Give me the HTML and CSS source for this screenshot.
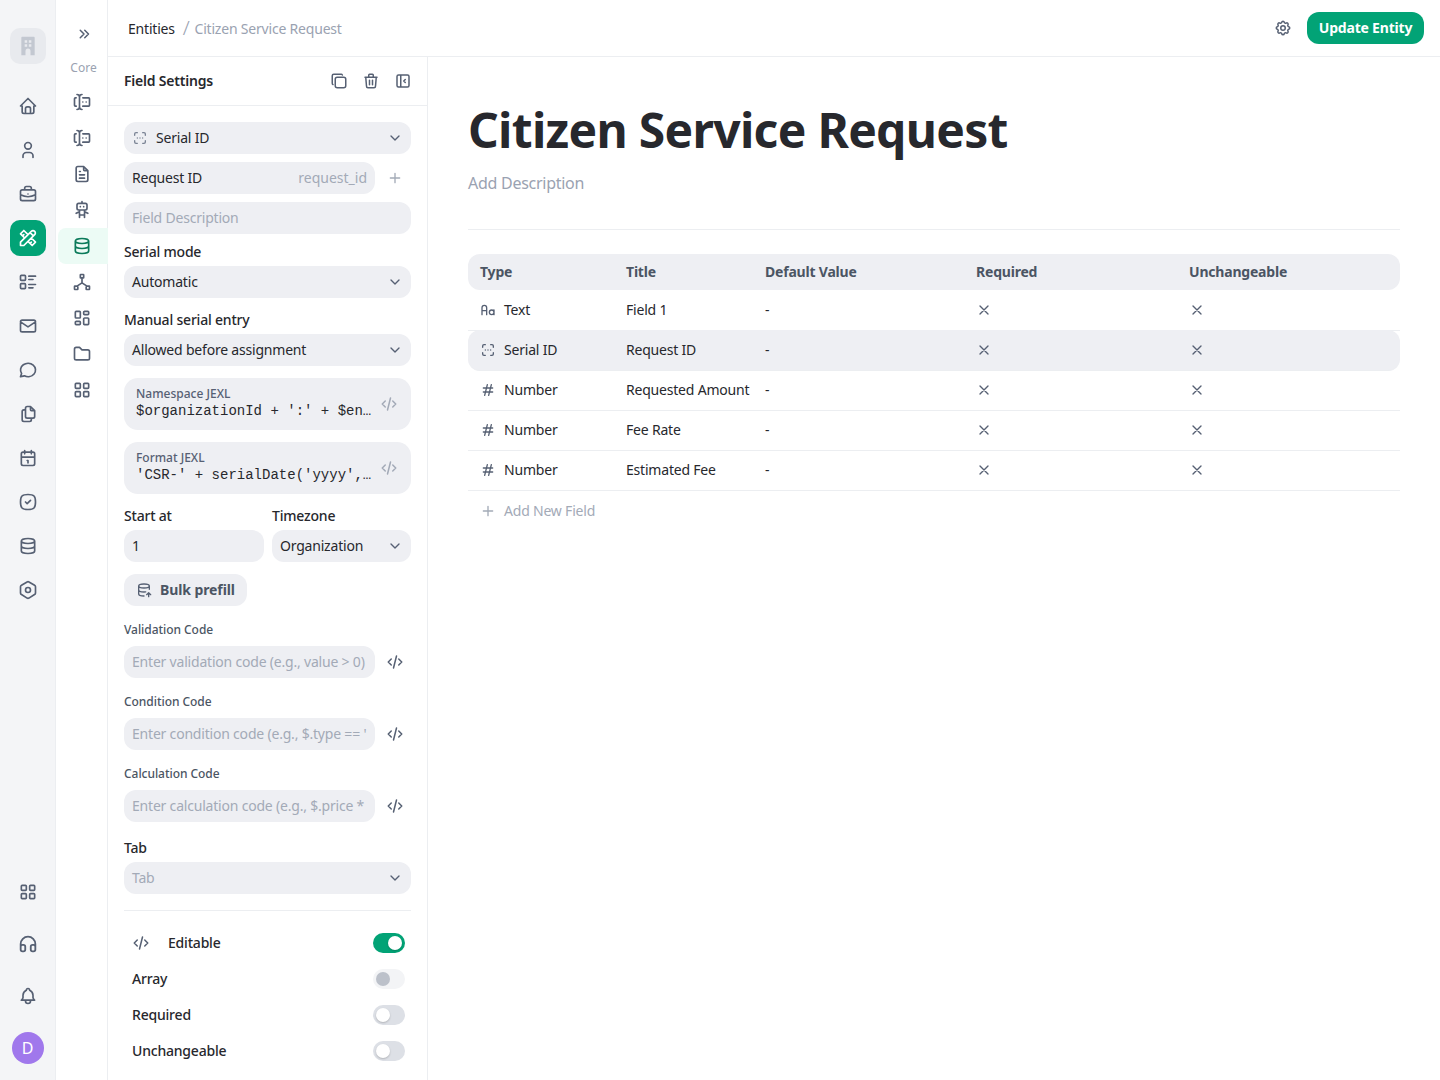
FILE: index.html
```html
<!DOCTYPE html>
<html lang="en">
<head>
<meta charset="UTF-8">
<meta name="viewport" content="width=device-width, initial-scale=1.0">
<title>Citizen Service Request</title>
<link rel="stylesheet" href="styles.css">
</head>
<body>
<svg class="sprite" xmlns="http://www.w3.org/2000/svg">
  <symbol id="i-home" viewBox="0 0 24 24"><path d="M5 12H3l9-9 9 9h-2M5 12v7a2 2 0 0 0 2 2h10a2 2 0 0 0 2-2v-7M9 21v-6a2 2 0 0 1 2-2h2a2 2 0 0 1 2 2v6"/></symbol>
  <symbol id="i-user" viewBox="0 0 24 24"><path d="M8 7a4 4 0 1 0 8 0a4 4 0 0 0-8 0M6 21v-2a4 4 0 0 1 4-4h4a4 4 0 0 1 4 4v2"/></symbol>
  <symbol id="i-briefcase" viewBox="0 0 24 24"><path d="M3 9a2 2 0 0 1 2-2h14a2 2 0 0 1 2 2v9a2 2 0 0 1-2 2H5a2 2 0 0 1-2-2zM8 7V5a2 2 0 0 1 2-2h4a2 2 0 0 1 2 2v2M12 12v.01M3 13a20 20 0 0 0 18 0"/></symbol>
  <symbol id="i-tools" viewBox="0 0 24 24"><path d="M3 21h4L20 8a1.5 1.5 0 0 0-4-4L3 17v4M14.5 5.5l4 4M12 8L7 3 3 7l5 5M7 8L5.5 9.5M16 12l5 5-4 4-5-5M16 17l-1.5 1.5"/></symbol>
  <symbol id="i-list" viewBox="0 0 24 24"><path d="M13 5h8M13 9h5M13 15h8M13 19h5M4 4h4a1 1 0 0 1 1 1v4a1 1 0 0 1-1 1H4a1 1 0 0 1-1-1V5a1 1 0 0 1 1-1zM4 14h4a1 1 0 0 1 1 1v4a1 1 0 0 1-1 1H4a1 1 0 0 1-1-1v-4a1 1 0 0 1 1-1z"/></symbol>
  <symbol id="i-mail" viewBox="0 0 24 24"><path d="M3 7a2 2 0 0 1 2-2h14a2 2 0 0 1 2 2v10a2 2 0 0 1-2 2H5a2 2 0 0 1-2-2zM3 7l9 6 9-6"/></symbol>
  <symbol id="i-message" viewBox="0 0 24 24"><path d="M3 20l1.3-3.9C1.976 12.663 2.874 8.228 6.4 5.726c3.526-2.501 8.59-2.296 11.845.48 3.255 2.777 3.695 7.266 1.029 10.501C16.608 19.942 11.659 20.922 7.7 19L3 20"/></symbol>
  <symbol id="i-files" viewBox="0 0 24 24"><path d="M15 3v4a1 1 0 0 0 1 1h4M18 17h-7a2 2 0 0 1-2-2V5a2 2 0 0 1 2-2h4l5 5v7a2 2 0 0 1-2 2zM16 17v2a2 2 0 0 1-2 2H7a2 2 0 0 1-2-2V9a2 2 0 0 1 2-2h2"/></symbol>
  <symbol id="i-calendar" viewBox="0 0 24 24"><path d="M4 7a2 2 0 0 1 2-2h12a2 2 0 0 1 2 2v12a2 2 0 0 1-2 2H6a2 2 0 0 1-2-2zM16 3v4M8 3v4M4 11h16M11 15h1M12 15v3"/></symbol>
  <symbol id="i-check" viewBox="0 0 24 24"><path d="M9 12l2 2 4-4M12 3c7.2 0 9 1.8 9 9s-1.8 9-9 9-9-1.8-9-9 1.8-9 9-9z"/></symbol>
  <symbol id="i-database" viewBox="0 0 24 24"><path d="M4 6a8 3 0 1 0 16 0a8 3 0 1 0-16 0M4 6v6a8 3 0 0 0 16 0V6M4 12v6a8 3 0 0 0 16 0v-6"/></symbol>
  <symbol id="i-hexagon" viewBox="0 0 24 24"><path d="M19.875 6.27A2.225 2.225 0 0 1 21 8.218v7.284c0 .809-.443 1.555-1.158 1.948l-6.75 4.27a2.269 2.269 0 0 1-2.184 0l-6.75-4.27A2.225 2.225 0 0 1 3 15.502V8.217c0-.809.443-1.554 1.158-1.947l6.75-3.98a2.33 2.33 0 0 1 2.25 0l6.75 3.98zM9 12a3 3 0 1 0 6 0 3 3 0 1 0-6 0"/></symbol>
  <symbol id="i-grid" viewBox="0 0 24 24"><path d="M5 4h4a1 1 0 0 1 1 1v4a1 1 0 0 1-1 1H5a1 1 0 0 1-1-1V5a1 1 0 0 1 1-1zM15 4h4a1 1 0 0 1 1 1v4a1 1 0 0 1-1 1h-4a1 1 0 0 1-1-1V5a1 1 0 0 1 1-1zM5 14h4a1 1 0 0 1 1 1v4a1 1 0 0 1-1 1H5a1 1 0 0 1-1-1v-4a1 1 0 0 1 1-1zM15 14h4a1 1 0 0 1 1 1v4a1 1 0 0 1-1 1h-4a1 1 0 0 1-1-1v-4a1 1 0 0 1 1-1z"/></symbol>
  <symbol id="i-headphones" viewBox="0 0 24 24"><path d="M4 15a2 2 0 0 1 2-2h1a2 2 0 0 1 2 2v3a2 2 0 0 1-2 2H6a2 2 0 0 1-2-2zM15 15a2 2 0 0 1 2-2h1a2 2 0 0 1 2 2v3a2 2 0 0 1-2 2h-1a2 2 0 0 1-2-2zM4 15v-3a8 8 0 0 1 16 0v3"/></symbol>
  <symbol id="i-bell" viewBox="0 0 24 24"><path d="M10 5a2 2 0 1 1 4 0 7 7 0 0 1 4 6v3a4 4 0 0 0 2 3H4a4 4 0 0 0 2-3v-3a7 7 0 0 1 4-6M9 17v1a3 3 0 0 0 6 0v-1"/></symbol>
  <symbol id="i-chevrons" viewBox="0 0 24 24"><path d="M7 7l5 5-5 5M13 7l5 5-5 5"/></symbol>
  <symbol id="i-forms" viewBox="0 0 24 24"><path d="M12 3a3 3 0 0 0-3 3v12a3 3 0 0 0 3 3M6 3a3 3 0 0 1 3 3v12a3 3 0 0 1-3 3M13 7h7a1 1 0 0 1 1 1v8a1 1 0 0 1-1 1h-7M5 7H4a1 1 0 0 0-1 1v8a1 1 0 0 0 1 1h1M17 12h.01M13 12h.01"/></symbol>
  <symbol id="i-file" viewBox="0 0 24 24"><path d="M14 3v4a1 1 0 0 0 1 1h4M17 21H7a2 2 0 0 1-2-2V5a2 2 0 0 1 2-2h7l5 5v11a2 2 0 0 1-2 2zM9 9h1M9 13h6M9 17h6"/></symbol>
  <symbol id="i-robot" viewBox="0 0 24 24"><path d="M8 4h8a2 2 0 0 1 2 2v4a2 2 0 0 1-2 2H8a2 2 0 0 1-2-2V6a2 2 0 0 1 2-2zM12 2v2M9 12v9M15 12v9M5 16l4-2M15 14l4 2M9 18h6M10 8v.01M14 8v.01"/></symbol>
  <symbol id="i-tree" viewBox="0 0 24 24"><path d="M10.5 3h3a.5.5 0 0 1 .5.5v3a.5.5 0 0 1-.5.5h-3a.5.5 0 0 1-.5-.5v-3a.5.5 0 0 1 .5-.5zM3.5 17h3a.5.5 0 0 1 .5.5v3a.5.5 0 0 1-.5.5h-3a.5.5 0 0 1-.5-.5v-3a.5.5 0 0 1 .5-.5zM17.5 17h3a.5.5 0 0 1 .5.5v3a.5.5 0 0 1-.5.5h-3a.5.5 0 0 1-.5-.5v-3a.5.5 0 0 1 .5-.5zM12 7v6M12 13l-6 4M12 13l6 4"/></symbol>
  <symbol id="i-dashboard" viewBox="0 0 24 24"><path d="M5 4h4a1 1 0 0 1 1 1v6a1 1 0 0 1-1 1H5a1 1 0 0 1-1-1V5a1 1 0 0 1 1-1M5 16h4a1 1 0 0 1 1 1v2a1 1 0 0 1-1 1H5a1 1 0 0 1-1-1v-2a1 1 0 0 1 1-1M15 12h4a1 1 0 0 1 1 1v6a1 1 0 0 1-1 1h-4a1 1 0 0 1-1-1v-6a1 1 0 0 1 1-1M15 4h4a1 1 0 0 1 1 1v2a1 1 0 0 1-1 1h-4a1 1 0 0 1-1-1V5a1 1 0 0 1 1-1"/></symbol>
  <symbol id="i-folder" viewBox="0 0 24 24"><path d="M5 4h4l3 3h7a2 2 0 0 1 2 2v8a2 2 0 0 1-2 2H5a2 2 0 0 1-2-2V6a2 2 0 0 1 2-2"/></symbol>
  <symbol id="i-copy" viewBox="0 0 24 24"><path d="M7 9.667A2.667 2.667 0 0 1 9.667 7h8.666A2.667 2.667 0 0 1 21 9.667v8.666A2.667 2.667 0 0 1 18.333 21H9.667A2.667 2.667 0 0 1 7 18.333zM4.012 16.737A2.005 2.005 0 0 1 3 15V5c0-1.1.9-2 2-2h10c.75 0 1.158.385 1.5 1"/></symbol>
  <symbol id="i-trash" viewBox="0 0 24 24"><path d="M4 7h16M10 11v6M14 11v6M5 7l1 12a2 2 0 0 0 2 2h8a2 2 0 0 0 2-2l1-12M9 7V4a1 1 0 0 1 1-1h4a1 1 0 0 1 1 1v3"/></symbol>
  <symbol id="i-collapse" viewBox="0 0 24 24"><path d="M4 6a2 2 0 0 1 2-2h12a2 2 0 0 1 2 2v12a2 2 0 0 1-2 2H6a2 2 0 0 1-2-2zM9 4v16M15 10l-2 2 2 2"/></symbol>
  <symbol id="i-code" viewBox="0 0 24 24"><path d="M7 8l-4 4 4 4M17 8l4 4-4 4M14 4l-4 16"/></symbol>
  <symbol id="i-down" viewBox="0 0 24 24"><path d="M6 9l6 6 6-6"/></symbol>
  <symbol id="i-plus" viewBox="0 0 24 24"><path d="M12 5v14M5 12h14"/></symbol>
  <symbol id="i-x" viewBox="0 0 24 24"><path d="M18 6L6 18M6 6l12 12"/></symbol>
  <symbol id="i-hash" viewBox="0 0 24 24"><path d="M5 9h14M5 15h14M11 4L7 20M17 4l-4 16"/></symbol>
  <symbol id="i-gear" viewBox="0 0 24 24"><path d="M10.325 4.317c.426-1.756 2.924-1.756 3.35 0a1.724 1.724 0 0 0 2.573 1.066c1.543-.94 3.31.826 2.37 2.37a1.724 1.724 0 0 0 1.065 2.572c1.756.426 1.756 2.924 0 3.35a1.724 1.724 0 0 0-1.066 2.573c.94 1.543-.826 3.31-2.37 2.37a1.724 1.724 0 0 0-2.572 1.065c-.426 1.756-2.924 1.756-3.35 0a1.724 1.724 0 0 0-2.573-1.066c-1.543.94-3.31-.826-2.37-2.37a1.724 1.724 0 0 0-1.065-2.572c-1.756-.426-1.756-2.924 0-3.35a1.724 1.724 0 0 0 1.066-2.573c-.94-1.543.826-3.31 2.37-2.37 1 .608 2.296.07 2.572-1.065zM9 12a3 3 0 1 0 6 0 3 3 0 0 0-6 0"/></symbol>
  <symbol id="i-serial" viewBox="0 0 24 24"><path d="M4 8V6a2 2 0 0 1 2-2h2M4 16v2a2 2 0 0 0 2 2h2M16 4h2a2 2 0 0 1 2 2v2M16 20h2a2 2 0 0 0 2-2v-2M8 12h.01M12 12h.01M16 12h.01"/></symbol>
  <symbol id="i-case" viewBox="0 0 24 24"><path d="M14 15.5a3.5 3.5 0 1 0 7 0 3.5 3.5 0 1 0-7 0M3 19V8.5a3.5 3.5 0 0 1 7 0V19M3 13h7M21 12v7"/></symbol>
  <symbol id="i-prefill" viewBox="0 0 24 24"><path d="M4 6c0 1.657 3.582 3 8 3s8-1.343 8-3-3.582-3-8-3-8 1.343-8 3M4 6v6c0 1.657 3.582 3 8 3 .9 0 1.8-.06 2.6-.16M20 6v5M4 12v6c0 1.657 3.582 3 8 3M19 22v-6M22 19l-3-3-3 3"/></symbol>
</svg>

<div class="app">
  <nav class="rail">
    <div class="logo">
      <svg viewBox="0 0 24 24" width="20" height="24"><path class="logo-fill" fill-rule="evenodd" d="M5 1h14a1 1 0 0 1 1 1v21h-5v-5a3 3 0 0 0-6 0v5H4V2a1 1 0 0 1 1-1zM8 5v3h3V5zM13 5v3h3V5zM8 10v3h3v-3zM13 10v3h3v-3z"/></svg>
    </div>
    <div class="rail-list">
      <a class="rail-item"><svg class="icon"><use href="#i-home"/></svg></a>
      <a class="rail-item"><svg class="icon"><use href="#i-user"/></svg></a>
      <a class="rail-item"><svg class="icon"><use href="#i-briefcase"/></svg></a>
      <a class="rail-item active"><svg class="icon"><use href="#i-tools"/></svg></a>
      <a class="rail-item"><svg class="icon"><use href="#i-list"/></svg></a>
      <a class="rail-item"><svg class="icon"><use href="#i-mail"/></svg></a>
      <a class="rail-item"><svg class="icon"><use href="#i-message"/></svg></a>
      <a class="rail-item"><svg class="icon"><use href="#i-files"/></svg></a>
      <a class="rail-item"><svg class="icon"><use href="#i-calendar"/></svg></a>
      <a class="rail-item"><svg class="icon"><use href="#i-check"/></svg></a>
      <a class="rail-item"><svg class="icon"><use href="#i-database"/></svg></a>
      <a class="rail-item"><svg class="icon"><use href="#i-hexagon"/></svg></a>
    </div>
    <div class="rail-bottom">
      <a class="rail-item"><svg class="icon"><use href="#i-grid"/></svg></a>
      <a class="rail-item"><svg class="icon icon-22"><use href="#i-headphones"/></svg></a>
      <a class="rail-item"><svg class="icon"><use href="#i-bell"/></svg></a>
      <div class="avatar">D</div>
    </div>
  </nav>

  <nav class="subnav">
    <a class="sub-toggle"><svg class="icon icon-18"><use href="#i-chevrons"/></svg></a>
    <div class="sub-title">Core</div>
    <a class="sub-item"><svg class="icon"><use href="#i-forms"/></svg></a>
    <a class="sub-item"><svg class="icon"><use href="#i-forms"/></svg></a>
    <a class="sub-item"><svg class="icon"><use href="#i-file"/></svg></a>
    <a class="sub-item"><svg class="icon"><use href="#i-robot"/></svg></a>
    <a class="sub-item active"><svg class="icon"><use href="#i-database"/></svg></a>
    <a class="sub-item"><svg class="icon"><use href="#i-tree"/></svg></a>
    <a class="sub-item"><svg class="icon"><use href="#i-dashboard"/></svg></a>
    <a class="sub-item"><svg class="icon"><use href="#i-folder"/></svg></a>
    <a class="sub-item"><svg class="icon"><use href="#i-grid"/></svg></a>
  </nav>

  <div class="content">
    <header class="topbar">
      <div class="crumbs">
        <span class="crumb">Entities</span>
        <span class="crumb-sep">/</span>
        <span class="crumb-current">Citizen Service Request</span>
      </div>
      <div class="top-actions">
        <svg class="icon icon-18"><use href="#i-gear"/></svg>
        <button class="btn-update">Update Entity</button>
      </div>
    </header>

    <div class="workspace">
      <aside class="panel">
        <div class="panel-head">
          <span class="panel-title">Field Settings</span>
          <div class="panel-tools">
            <svg class="icon icon-18"><use href="#i-copy"/></svg>
            <svg class="icon icon-18"><use href="#i-trash"/></svg>
            <svg class="icon icon-18"><use href="#i-collapse"/></svg>
          </div>
        </div>

        <div class="panel-body">
          <div class="stack">
            <div class="field field-select">
              <svg class="icon icon-16 faded"><use href="#i-serial"/></svg>
              <span class="field-text type-text">Serial ID</span>
              <svg class="icon icon-16"><use href="#i-down"/></svg>
            </div>
            <div class="with-side">
              <div class="field">
                <span class="field-text">Request ID</span>
                <span class="placeholder key">request_id</span>
              </div>
              <svg class="icon icon-16 side-plus pale"><use href="#i-plus"/></svg>
            </div>
            <div class="field"><span class="placeholder">Field Description</span></div>
          </div>

          <div class="group">
            <label class="label">Serial mode</label>
            <div class="field field-select">
              <span class="field-text">Automatic</span>
              <svg class="icon icon-16"><use href="#i-down"/></svg>
            </div>
          </div>

          <div class="group">
            <label class="label">Manual serial entry</label>
            <div class="field field-select">
              <span class="field-text">Allowed before assignment</span>
              <svg class="icon icon-16"><use href="#i-down"/></svg>
            </div>
          </div>

          <div class="jexl">
            <div class="jexl-text">
              <div class="jexl-label">Namespace JEXL</div>
              <div class="jexl-code">$organizationId + ':' + $en…</div>
            </div>
            <svg class="icon icon-18 pale"><use href="#i-code"/></svg>
          </div>

          <div class="jexl">
            <div class="jexl-text">
              <div class="jexl-label">Format JEXL</div>
              <div class="jexl-code">'CSR-' + serialDate('yyyy',…</div>
            </div>
            <svg class="icon icon-18 pale"><use href="#i-code"/></svg>
          </div>

          <div class="two-col">
            <div class="group">
              <label class="label">Start at</label>
              <div class="field"><span class="field-text">1</span></div>
            </div>
            <div class="group">
              <label class="label">Timezone</label>
              <div class="field field-select">
                <span class="field-text">Organization</span>
                <svg class="icon icon-16"><use href="#i-down"/></svg>
              </div>
            </div>
          </div>

          <button class="btn-prefill"><svg class="icon icon-16"><use href="#i-prefill"/></svg>Bulk prefill</button>

          <div class="code-group">
            <label class="label-small">Validation Code</label>
            <div class="with-side">
              <div class="field"><span class="placeholder">Enter validation code (e.g., value &gt; 0)</span></div>
              <svg class="icon icon-18 side-code"><use href="#i-code"/></svg>
            </div>
          </div>
          <div class="code-group">
            <label class="label-small">Condition Code</label>
            <div class="with-side">
              <div class="field"><span class="placeholder">Enter condition code (e.g., $.type == '</span></div>
              <svg class="icon icon-18 side-code"><use href="#i-code"/></svg>
            </div>
          </div>
          <div class="code-group">
            <label class="label-small">Calculation Code</label>
            <div class="with-side">
              <div class="field"><span class="placeholder">Enter calculation code (e.g., $.price *</span></div>
              <svg class="icon icon-18 side-code"><use href="#i-code"/></svg>
            </div>
          </div>

          <div class="group group-tab">
            <label class="label">Tab</label>
            <div class="field field-select">
              <span class="placeholder">Tab</span>
              <svg class="icon icon-16"><use href="#i-down"/></svg>
            </div>
          </div>

          <div class="toggles">
            <div class="toggle-row">
              <svg class="icon icon-18 code-mark"><use href="#i-code"/></svg>
              <span class="toggle-name">Editable</span>
              <span class="toggle on"></span>
            </div>
            <div class="toggle-row">
              <span class="toggle-name">Array</span>
              <span class="toggle disabled"></span>
            </div>
            <div class="toggle-row">
              <span class="toggle-name">Required</span>
              <span class="toggle"></span>
            </div>
            <div class="toggle-row">
              <span class="toggle-name">Unchangeable</span>
              <span class="toggle"></span>
            </div>
          </div>
        </div>
      </aside>

      <main class="main">
        <h1 class="entity-title">Citizen Service Request</h1>
        <div class="entity-desc">Add Description</div>

        <div class="fields">
          <div class="row head">
            <div>Type</div><div>Title</div><div>Default Value</div><div>Required</div><div>Unchangeable</div>
          </div>
          <div class="row">
            <div class="type"><svg class="icon icon-16"><use href="#i-case"/></svg>Text</div><div>Field 1</div><div>-</div>
            <div><svg class="icon x"><use href="#i-x"/></svg></div><div><svg class="icon x"><use href="#i-x"/></svg></div>
          </div>
          <div class="row selected">
            <div class="type"><svg class="icon icon-16"><use href="#i-serial"/></svg>Serial ID</div><div>Request ID</div><div>-</div>
            <div><svg class="icon x"><use href="#i-x"/></svg></div><div><svg class="icon x"><use href="#i-x"/></svg></div>
          </div>
          <div class="row">
            <div class="type"><svg class="icon icon-16"><use href="#i-hash"/></svg>Number</div><div>Requested Amount</div><div>-</div>
            <div><svg class="icon x"><use href="#i-x"/></svg></div><div><svg class="icon x"><use href="#i-x"/></svg></div>
          </div>
          <div class="row">
            <div class="type"><svg class="icon icon-16"><use href="#i-hash"/></svg>Number</div><div>Fee Rate</div><div>-</div>
            <div><svg class="icon x"><use href="#i-x"/></svg></div><div><svg class="icon x"><use href="#i-x"/></svg></div>
          </div>
          <div class="row">
            <div class="type"><svg class="icon icon-16"><use href="#i-hash"/></svg>Number</div><div>Estimated Fee</div><div>-</div>
            <div><svg class="icon x"><use href="#i-x"/></svg></div><div><svg class="icon x"><use href="#i-x"/></svg></div>
          </div>
          <div class="add-field"><svg class="icon icon-16"><use href="#i-plus"/></svg>Add New Field</div>
        </div>
      </main>
    </div>
  </div>
</div>
</body>
</html>
```

FILE: styles.css
```css
* {
    box-sizing: border-box;
}

body {
    margin: 0;
    font-family: "Noto Sans", "Open Sans", sans-serif;
    font-size: 14px;
    line-height: 20px;
    letter-spacing: -0.2px;
    color: #27282d;
    background-color: #fff;
}

.sprite {
    display: none;
}

.icon {
    width: 20px;
    height: 20px;
    flex: none;
    display: block;
    fill: none;
    stroke: #566073;
    stroke-width: 2;
    stroke-linecap: round;
    stroke-linejoin: round;
}

.icon-22 {
    width: 22px;
    height: 22px;
}

.icon-18 {
    width: 18px;
    height: 18px;
}

.icon-16 {
    width: 16px;
    height: 16px;
}

.app {
    display: flex;
    height: 1080px;
    overflow: hidden;
}

/* far left rail */
.rail {
    width: 56px;
    flex: none;
    display: flex;
    flex-direction: column;
    align-items: center;
    padding-top: 28px;
    padding-bottom: 14px;
    background-color: #f4f5f7;
    border-right: 1px solid #eceef1;
}

.logo {
    width: 36px;
    height: 36px;
    display: flex;
    align-items: center;
    justify-content: center;
    border-radius: 10px;
    background-color: #e8eaee;
}

.logo-fill {
    fill: #c3c8d1;
}

.rail-list {
    display: flex;
    flex-direction: column;
    gap: 8px;
    margin-top: 24px;
}

.rail-bottom {
    margin-top: auto;
    display: flex;
    flex-direction: column;
    align-items: center;
    gap: 16px;
}

.rail-item {
    width: 36px;
    height: 36px;
    display: flex;
    align-items: center;
    justify-content: center;
    border-radius: 10px;
}

.rail-item.active {
    background-color: #02a376;
}

.rail-item.active .icon {
    stroke: #fff;
}

.avatar {
    width: 32px;
    height: 32px;
    margin: 2px 0;
    border-radius: 50%;
    background-color: #a078ec;
    color: #fff;
    font-size: 16px;
    display: flex;
    align-items: center;
    justify-content: center;
}

/* second column */
.subnav {
    width: 52px;
    flex: none;
    display: flex;
    flex-direction: column;
    align-items: center;
    padding-top: 16px;
    border-right: 1px solid #eceef1;
}

.sub-toggle {
    height: 36px;
    margin-left: 4px;
    display: flex;
    align-items: center;
}

.sub-title {
    margin: 8px 0 8px 4px;
    font-size: 12px;
    line-height: 16px;
    letter-spacing: 0;
    color: #9aa2b1;
}

.sub-item {
    width: 50px;
    height: 36px;
    margin-left: 2px;
    padding-left: 14px;
    padding-right: 16px;
    display: flex;
    align-items: center;
    flex: none;
    border-radius: 8px 0 0 8px;
}

.sub-item.active {
    background-color: #ecfbf5;
}

.sub-item.active .icon {
    stroke: #0b7a5a;
}

.content {
    flex: 1;
    min-width: 0;
    display: flex;
    flex-direction: column;
}

.topbar {
    height: 57px;
    flex: none;
    display: flex;
    align-items: center;
    justify-content: space-between;
    padding: 0 16px 0 20px;
    border-bottom: 1px solid #eceef1;
}

.crumbs {
    display: flex;
    align-items: center;
    margin-top: 2px;
}

.crumb-sep {
    margin-left: 8px;
    margin-right: 5px;
    margin-top: -2px;
    font-size: 20px;
    font-weight: 300;
    color: #9aa2b1;
}

.crumb-current {
    color: #9aa2b1;
}

.top-actions {
    display: flex;
    align-items: center;
    gap: 15px;
}

.btn-update {
    height: 32px;
    width: 117px;
    padding: 0 0 2px;
    border: none;
    border-radius: 12px;
    background-color: #02a376;
    color: #fff;
    font-family: inherit;
    font-size: 14px;
    font-weight: 700;
    letter-spacing: -0.2px;
}

.workspace {
    flex: 1;
    min-height: 0;
    display: flex;
}

/* field settings */
.panel {
    width: 320px;
    flex: none;
    border-right: 1px solid #eceef1;
    overflow: hidden;
}

.panel-head {
    height: 49px;
    display: flex;
    align-items: center;
    justify-content: space-between;
    padding: 0 15px 0 16px;
    border-bottom: 1px solid #eceef1;
}

.panel-title {
    font-weight: 600;
}

.panel-tools {
    display: flex;
    gap: 14px;
}

.panel-body {
    padding: 16px 16px 0;
    display: flex;
    flex-direction: column;
    gap: 12px;
}

.stack {
    display: flex;
    flex-direction: column;
    gap: 8px;
    margin-bottom: -4px;
}

.group {
    display: flex;
    flex-direction: column;
    gap: 4px;
    min-width: 0;
}

.group-tab {
    margin-top: 4px;
}

.label {
    font-weight: 500;
}

.label-small {
    font-size: 12px;
    line-height: 16px;
    font-weight: 500;
    letter-spacing: -0.05px;
    color: #4b5563;
}

.field {
    height: 32px;
    flex: 1;
    min-width: 0;
    display: flex;
    align-items: center;
    justify-content: space-between;
    padding: 0 8px;
    border-radius: 12px;
    background-color: #eeeff3;
}

.group > .field,
.stack > .field {
    flex: none;
}

.field-text {
    white-space: nowrap;
}

.type-text {
    margin-left: 8px;
    margin-right: auto;
}

.placeholder {
    color: #a3aab7;
    white-space: nowrap;
}

.key {
    letter-spacing: 0;
}

.faded {
    stroke: #7a8394;
}

.pale {
    stroke: #a3aab7;
}

.with-side {
    display: flex;
    align-items: center;
}

.side-plus {
    margin-left: 12px;
    margin-right: 8px;
}

.side-code {
    margin-left: 11px;
    margin-right: 7px;
}

.jexl {
    height: 52px;
    display: flex;
    align-items: center;
    gap: 10px;
    padding: 0 12px;
    border-radius: 14px;
    background-color: #eeeff3;
}

.jexl-text {
    flex: 1;
    min-width: 0;
}

.jexl-label {
    margin-top: -2px;
    font-size: 12px;
    line-height: 16px;
    font-weight: 500;
    letter-spacing: 0;
    color: #566073;
}

.jexl-code {
    font-family: "Liberation Mono", monospace;
    font-size: 14px;
    line-height: 18px;
    letter-spacing: 0;
    white-space: nowrap;
}

.jexl .icon {
    margin-top: -1px;
    margin-left: -1px;
    margin-right: 1px;
}

.two-col {
    display: grid;
    grid-template-columns: 140px 139px;
    gap: 8px;
}

.btn-prefill {
    width: 123px;
    height: 32px;
    display: flex;
    align-items: center;
    justify-content: center;
    gap: 8px;
    padding: 0 0 2px;
    border: none;
    border-radius: 12px;
    background-color: #eeeff3;
    color: #4b5563;
    font-family: inherit;
    font-size: 14px;
    font-weight: 700;
    letter-spacing: -0.1px;
}

.btn-prefill .icon {
    margin-top: 2px;
}

.code-group {
    display: flex;
    flex-direction: column;
    gap: 8px;
    margin-top: 4px;
}

.toggles {
    margin-top: 4px;
    padding-top: 14px;
    border-top: 1px solid #eceef1;
}

.toggle-row {
    height: 36px;
    display: flex;
    align-items: center;
    padding: 0 6px 0 8px;
}

.code-mark {
    margin-right: 18px;
}

.toggle-name {
    font-weight: 500;
    margin-right: auto;
}

.toggle {
    width: 32px;
    height: 20px;
    padding: 3px;
    display: flex;
    justify-content: flex-start;
    border-radius: 10px;
    background-color: #dde0e6;
}

.toggle::after {
    content: "";
    width: 14px;
    height: 14px;
    border-radius: 50%;
    background-color: #fff;
    box-shadow: 0 1px 2px rgba(0,0,0,0.2);
}

.toggle.on {
    background-color: #02a376;
    justify-content: flex-end;
}

.toggle.disabled {
    background-color: #f3f4f6;
}

.toggle.disabled::after {
    background-color: #bcc1ca;
    box-shadow: none;
}

/* main area */
.main {
    flex: 1;
    min-width: 0;
    padding: 40px 40px 0;
}

.entity-title {
    margin: 0;
    font-size: 48px;
    line-height: 66px;
    font-weight: 700;
    letter-spacing: -0.7px;
}

.entity-desc {
    margin-top: 8px;
    padding-bottom: 34px;
    font-size: 16px;
    line-height: 24px;
    letter-spacing: -0.27px;
    color: #9aa2b1;
    border-bottom: 1px solid #eceef1;
}

.fields {
    margin-top: 24px;
}

.row {
    display: grid;
    grid-template-columns: 146px 139px 211px 213px 1fr;
    align-items: center;
    height: 41px;
    margin-bottom: -1px;
    border-bottom: 1px solid #eceef1;
}

.row > div {
    padding-left: 12px;
}

.row.head {
    height: 36px;
    margin-bottom: 0;
    border-bottom: none;
    border-radius: 12px;
    background-color: #eeeff3;
    font-weight: 700;
    color: #4b5563;
}

.row.selected {
    border-radius: 12px;
    background-color: #eeeff3;
}

.type {
    display: flex;
    align-items: center;
    gap: 8px;
}

.x {
    width: 16px;
    height: 16px;
}

.add-field {
    height: 42px;
    display: flex;
    align-items: center;
    gap: 8px;
    padding-left: 12px;
    color: #a3aab7;
}

.add-field .icon {
    stroke: #a3aab7;
}
```
